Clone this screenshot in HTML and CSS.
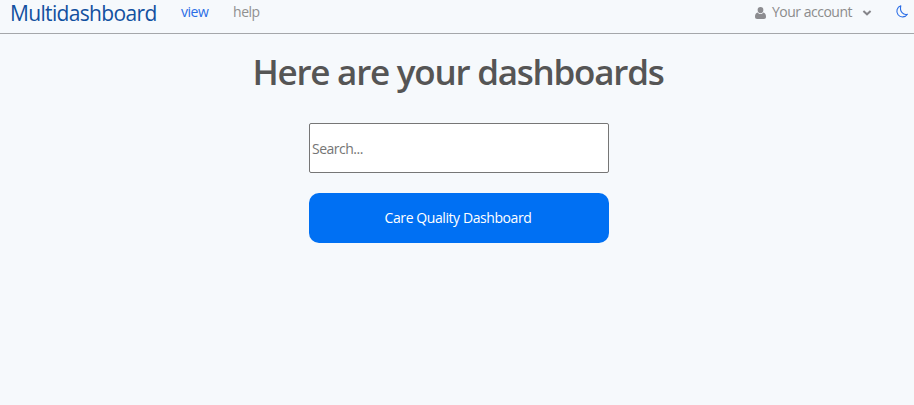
FILE: index.html
```html
<!DOCTYPE html>
<html lang="en">
<head>
<meta charset="utf-8">
<title>Multidashboard</title>
<link rel="stylesheet" href="styles.css">
</head>
<body>
<nav class="navbar">
  <a class="brand">Multidashboard</a>
  <a class="link active">view</a>
  <a class="link">help</a>
  <div class="account">
    <svg class="user" viewBox="0 0 11 12"><path d="M2.8 5.4C3.5 6.4 4.4 6.9 5.5 6.9S7.5 6.4 8.2 5.4C10.3 5.5 11 7.6 11 9.8 11 11.2 10.2 12 8.9 12H2.1C.8 12 0 11.2 0 9.8 0 7.6.7 5.5 2.8 5.4z"/><ellipse cx="5.5" cy="3.1" rx="2.9" ry="3.1"/></svg>
    <span class="account-text">Your account</span>
    <svg class="chevron" viewBox="0 0 10 6"><path d="M1.4 1.1 5 4.3 8.6 1.1"/></svg>
  </div>
  <svg class="moon" viewBox="0 0 14 14"><path d="M5.8.8A5.7 5.7 0 1 0 12.4 9.200C8.500 10.300 4.300 6.800 5.800.8z"/></svg>
</nav>
<main class="content">
  <h1 class="title">Here are your dashboards</h1>
  <input class="search" type="text" placeholder="Search...">
  <button class="dashboard">Care Quality Dashboard</button>
</main>
</body>
</html>
```
FILE: styles.css
```css
* { box-sizing: border-box; }
body {
  margin: 0;
  background: #f6f9fc;
  color: #555;
  font: 14px/20px "Open Sans", "Noto Sans", sans-serif;
  letter-spacing: -0.46px;
  height: 405px;
  overflow: hidden;
}
.navbar {
  display: flex;
  height: 34px;
  padding: 0 5px 0 10px;
  border-bottom: 1px solid #a5a7aa;
  white-space: nowrap;
}
.brand {
  width: 147px;
  margin-right: 24px;
  color: #1250a0;
  font-size: 21px;
  line-height: 27px;
  letter-spacing: -0.66px;
}
.link { width: 28px; margin-right: 24px; line-height: 24px; color: #909090; }
.active { color: #2a6de6; }
.account {
  display: flex;
  align-items: center;
  height: 25px;
  margin-left: auto;
  color: #8c8c8c;
}
.account-text { width: 81px; margin: 0 9px 2px 6px; letter-spacing: -0.5px; }
.user { width: 11px; height: 12px; fill: #8c8c90; }
.chevron { width: 10px; height: 6px; fill: none; stroke: #85858a; stroke-width: 2; }
.moon { width: 14px; height: 14px; margin: 5px 0 0 23px; fill: none; stroke: #2a6de6; stroke-width: 1.1; stroke-linejoin: round; }
.content { display: flex; flex-direction: column; align-items: center; padding-left: 4px; }
.title { margin: 14px 2px 27px 0; font-size: 35px; line-height: 48px; font-weight: 600; letter-spacing: -1.24px; white-space: nowrap; }
.search {
  width: 300px;
  height: 50px;
  padding: 1px 2px;
  border: 1px solid #767676;
  border-radius: 2px;
  background: #fff;
  font: inherit;
  letter-spacing: -0.5px;
}
.search::placeholder { color: #757575; }
.dashboard {
  width: 300px;
  height: 50px;
  margin-top: 20px;
  padding: 0 2px 0 0;
  border: 0;
  border-radius: 10px;
  background: #0070f3;
  color: #fff;
  font: inherit;
  letter-spacing: -0.42px;
}
```
